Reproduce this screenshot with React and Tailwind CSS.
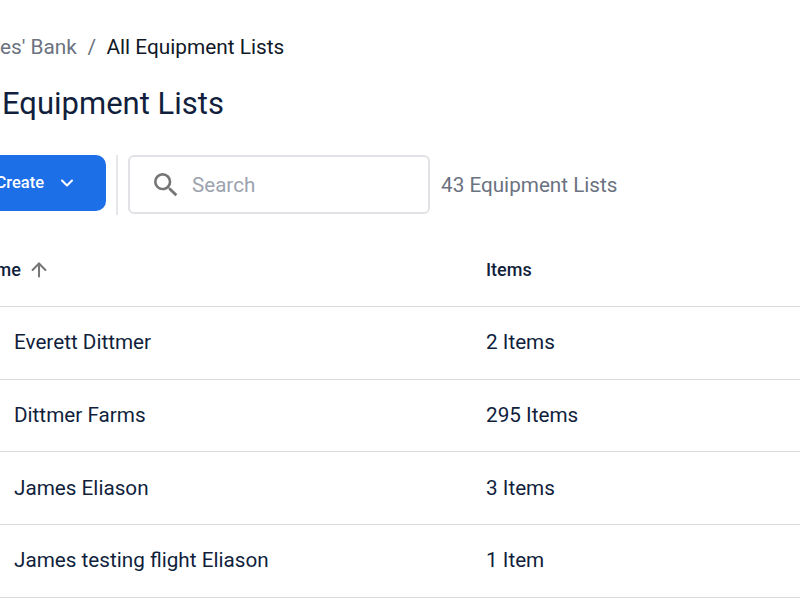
import { ChevronDown, ArrowUp } from 'lucide-react'

const rows = [
  { name: 'Everett Dittmer', items: '2 Items' },
  { name: 'Dittmer Farms', items: '295 Items' },
  { name: 'James Eliason', items: '3 Items' },
  { name: 'James testing flight Eliason', items: '1 Item' },
  { name: 'Jensen Farms', items: '12 Items' },
]

export default function App() {
  return (
    <div className="w-[800px] h-[600px] overflow-hidden bg-white font-['Roboto',sans-serif]">
      <div className="ml-[-46px] w-[900px]">
        <nav className="flex items-center h-6 pt-[36px] box-content ml-[5px] text-[20.8px] whitespace-nowrap">
          <span className="text-[#6b7280]">James' Bank</span>
          <span className="mx-[10.5px] text-[#6b7280]">/</span>
          <span className="text-[#111827]">All Equipment Lists</span>
        </nav>
        <h1 className="mt-[23px] ml-[5px] text-[31px] leading-[42px] text-[#111f3d] whitespace-nowrap">All Equipment Lists</h1>
        <div className="flex items-start mt-[30px] h-[60px]">
          <button className="flex items-center justify-end w-[152px] h-[56px] pr-[29px] rounded-[10px] bg-[#1d6fe8] text-white text-[16.5px] font-medium">
            <span className="mt-[1px] mr-[1px]">Create</span>
            <ChevronDown className="ml-[12px] w-[20px] h-[20px]" strokeWidth={2.5} />
          </button>
          <div className="w-[2px] h-[60px] mx-[10px] bg-[#e5e7eb]" />
          <div className="flex items-center w-[302px] h-[59px] pl-[20px] rounded-[6px] border-2 border-[#e0e2e5]">
            <svg viewBox="0 0 24 24" className="w-[32px] h-[32px] shrink-0 fill-[#757575]">
              <path d="M15.5 14h-.79l-.28-.27A6.471 6.471 0 0 0 16 9.5 6.5 6.5 0 1 0 9.5 16c1.61 0 3.09-.59 4.23-1.57l.27.28v.79l5 4.99L20.49 19l-4.99-5zm-6 0C7.01 14 5 11.99 5 9.5S7.01 5 9.5 5 14 7.01 14 9.5 11.99 14 9.5 14z" />
            </svg>
            <span className="ml-[10px] mt-[1px] text-[20.6px] text-[#9ca3af]">Search</span>
          </div>
          <span className="ml-[11px] mt-[16px] text-[20.7px] leading-[28px] text-[#6b7280] whitespace-nowrap">43 Equipment Lists</span>
        </div>
        <div className="flex items-center h-[59px] pb-[7px] mt-[25px] border-b border-[#d9dadc] text-[18px] font-medium text-[#111f3d] box-content">
          <div className="flex items-center w-[532px] pl-[19px]">
            Name
            <ArrowUp className="ml-[7px] mt-[1px] w-[22px] h-[22px] text-[#777]" strokeWidth={2.25} />
          </div>
          <div>Items</div>
        </div>
        {rows.map((r) => (
          <div key={r.name} className="flex items-center h-[72.67px] border-b border-[#d9dadc] text-[20.7px] text-[#111f3d]">
            <div className="w-[472px] ml-[60px]">{r.name}</div>
            <div>{r.items}</div>
          </div>
        ))}
      </div>
    </div>
  )
}
